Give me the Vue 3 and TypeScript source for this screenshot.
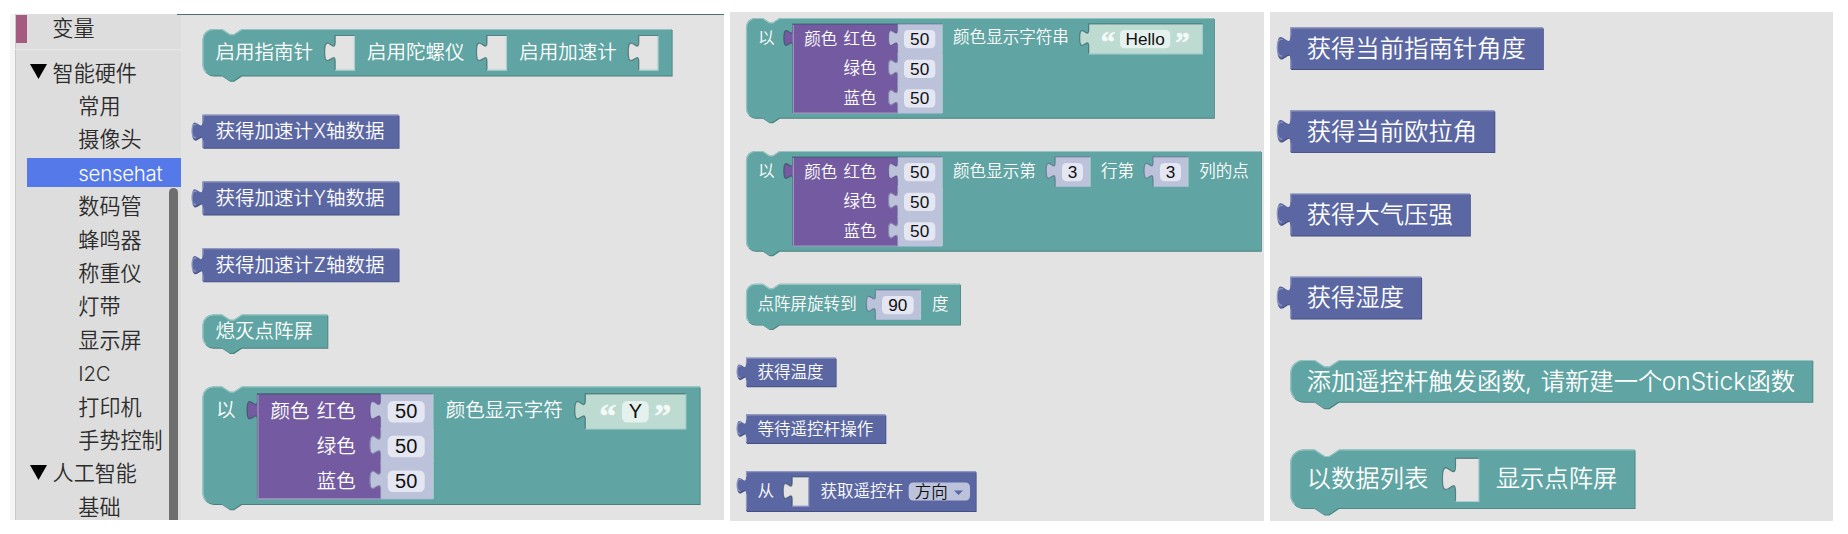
<script setup lang="ts">
type Kind = 'stack' | 'value'
type Tone = 'open' | 'math' | 'text' | 'colour' | 'mathRow'

interface Label { x: number; y: number; t: string; xs?: [number, string, number?][] }
interface Socket { x: number; y: number; r: number; b: number; tone: Tone }
interface Field { x: number; y: number; w: number; h: number; t: string; kind: 'math' | 'text' | 'menu' }
interface Block {
  kind: Kind
  x: number
  y: number
  r: number
  b: number
  labels: Label[]
  sockets?: Socket[]
  fields?: Field[]
}
interface Flyout {
  id: string
  box: string
  width: number
  height: number
  scale: number
  font: number
  digit: number
  blocks: Block[]
}

const categories = [
  { name: '智能硬件', open: true },
  { name: '常用' },
  { name: '摄像头' },
  { name: 'sensehat', active: true, latin: true },
  { name: '数码管' },
  { name: '蜂鸣器' },
  { name: '称重仪' },
  { name: '灯带' },
  { name: '显示屏' },
  { name: 'I2C', latin: true },
  { name: '打印机' },
  { name: '手势控制' },
  { name: '人工智能', open: true },
  { name: '基础' },
]

const value = (x: number, y: number, r: number, b: number, labels: Label[]): Block => ({
  kind: 'value', x, y, r, b, labels,
})

const first: Block[] = [
  {
    kind: 'stack', x: 203, y: 29.5, r: 672.3, b: 76,
    labels: [
      { x: 215.6, y: 52.3, t: '启用指南针' },
      { x: 367.2, y: 52.3, t: '启用陀螺仪' },
      { x: 519.4, y: 52.3, t: '启用加速计' },
    ],
    sockets: [
      { x: 335.7, y: 36, r: 355, b: 70.7, tone: 'open' },
      { x: 487.5, y: 36, r: 507, b: 70.7, tone: 'open' },
      { x: 639.3, y: 36, r: 658.5, b: 70.7, tone: 'open' },
    ],
  },
  ...['X', 'Y', 'Z'].map((axis, i) =>
    value(203, 115.3 + i * 66.8, 399.2, 148.3 + i * 66.8, [
      {
        x: 215.6, y: 131 + i * 66.8, t: '',
        xs: [[215.6, '获得加速计'], [313.5, axis, 12.4], [326, '轴数据']],
      },
    ]),
  ),
  {
    kind: 'stack', x: 203, y: 315, r: 328, b: 348.3,
    labels: [{ x: 215.6, y: 331.3, t: '熄灭点阵屏' }],
  },
  {
    kind: 'stack', x: 203, y: 387, r: 700.3, b: 504.5,
    labels: [
      { x: 216, y: 410, t: '以' },
      { x: 270.6, y: 411, t: '颜色' },
      { x: 316.8, y: 411, t: '红色' },
      { x: 316.8, y: 446, t: '绿色' },
      { x: 316.8, y: 480.6, t: '蓝色' },
      { x: 445.8, y: 409.8, t: '颜色显示字符' },
    ],
    sockets: [
      { x: 258, y: 394.3, r: 381, b: 499.3, tone: 'colour' },
      { x: 381, y: 394.3, r: 433.5, b: 429, tone: 'math' },
      { x: 381, y: 429, r: 433.5, b: 464, tone: 'mathRow' },
      { x: 381, y: 464, r: 433.5, b: 499.3, tone: 'mathRow' },
      { x: 585.8, y: 394.3, r: 686.3, b: 429.5, tone: 'text' },
    ],
    fields: [
      { x: 387.7, y: 401, w: 37, h: 21.5, t: '50', kind: 'math' },
      { x: 387.7, y: 435.8, w: 37, h: 21.5, t: '50', kind: 'math' },
      { x: 387.7, y: 470.5, w: 37, h: 21.5, t: '50', kind: 'math' },
      { x: 622, y: 401, w: 26.7, h: 21.5, t: 'Y', kind: 'text' },
    ],
  },
]

const colourBlock = (dy: number): Pick<Block, 'labels' | 'sockets' | 'fields'> => ({
  labels: [
    { x: 758, y: 37.5 + dy, t: '以' },
    { x: 804.4, y: 38.7 + dy, t: '颜色' },
    { x: 843.6, y: 38.7 + dy, t: '红色' },
    { x: 843.6, y: 68.3 + dy, t: '绿色' },
    { x: 843.6, y: 98 + dy, t: '蓝色' },
  ],
  sockets: [
    { x: 793.3, y: 24.5 + dy, r: 898, b: 113.5 + dy, tone: 'colour' },
    { x: 898, y: 24.5 + dy, r: 942.6, b: 54 + dy, tone: 'math' },
    { x: 898, y: 54 + dy, r: 942.6, b: 84 + dy, tone: 'mathRow' },
    { x: 898, y: 84 + dy, r: 942.6, b: 113.5 + dy, tone: 'mathRow' },
  ],
  fields: [
    { x: 904, y: 30 + dy, w: 31.3, h: 18.3, t: '50', kind: 'math' },
    { x: 904, y: 59.7 + dy, w: 31.3, h: 18.3, t: '50', kind: 'math' },
    { x: 904, y: 89.3 + dy, w: 31.3, h: 18.3, t: '50', kind: 'math' },
  ],
})

const showText = colourBlock(0)
const showDot = colourBlock(133)

const second: Block[] = [
  {
    kind: 'stack', x: 746.5, y: 18.5, r: 1214.5, b: 118.3,
    labels: [...showText.labels, { x: 953.2, y: 37.4, t: '颜色显示字符串' }],
    sockets: [...showText.sockets!, { x: 1089.2, y: 24.5, r: 1202.8, b: 54.3, tone: 'text' }],
    fields: [...showText.fields!, { x: 1120, y: 30, w: 50.3, h: 18.3, t: 'Hello', kind: 'text' }],
  },
  {
    kind: 'stack', x: 746.5, y: 151.5, r: 1261.5, b: 251.3,
    labels: [
      ...showDot.labels,
      { x: 953.2, y: 170.6, t: '颜色显示第' },
      { x: 1101.2, y: 170.6, t: '行第' },
      { x: 1199.4, y: 170.6, t: '列的点' },
    ],
    sockets: [
      ...showDot.sockets!,
      { x: 1055.7, y: 157.3, r: 1090.6, b: 187.3, tone: 'math' },
      { x: 1153.6, y: 157.3, r: 1188.5, b: 187.3, tone: 'math' },
    ],
    fields: [
      ...showDot.fields!,
      { x: 1062, y: 163, w: 21, h: 18.3, t: '3', kind: 'math' },
      { x: 1160, y: 163, w: 21, h: 18.3, t: '3', kind: 'math' },
    ],
  },
  {
    kind: 'stack', x: 746.5, y: 284.3, r: 960.6, b: 325.2,
    labels: [
      { x: 757.6, y: 303.7, t: '点阵屏旋转到' },
      { x: 932, y: 303.7, t: '度' },
    ],
    sockets: [{ x: 875.9, y: 290.3, r: 921, b: 320.3, tone: 'math' }],
    fields: [{ x: 882, y: 296, w: 31.7, h: 18.3, t: '90', kind: 'math' }],
  },
  value(746.5, 358.3, 836.3, 386.8, [{ x: 757.6, y: 371.8, t: '获得温度' }]),
  value(746.5, 415, 886, 443.5, [{ x: 757.6, y: 428.6, t: '等待遥控杆操作' }]),
  {
    kind: 'value', x: 746.5, y: 471.8, r: 976.3, b: 511.5,
    labels: [
      { x: 757.6, y: 491.2, t: '从' },
      { x: 820.5, y: 491.2, t: '获取遥控杆' },
    ],
    sockets: [{ x: 792.7, y: 477.5, r: 809.2, b: 506.6, tone: 'open' }],
    fields: [{ x: 908.7, y: 482.4, w: 61.3, h: 18.2, t: '方向', kind: 'menu' }],
  },
]

const third: Block[] = [
  value(1290.8, 28, 1543.5, 69.5, [{ x: 1306.8, y: 47.7, t: '获得当前指南针角度' }]),
  value(1290.8, 111, 1495, 152.7, [{ x: 1306.8, y: 131, t: '获得当前欧拉角' }]),
  value(1290.8, 194.2, 1470.5, 236, [{ x: 1306.8, y: 214.2, t: '获得大气压强' }]),
  value(1290.8, 277.3, 1421.8, 319, [{ x: 1306.8, y: 297.4, t: '获得湿度' }]),
  {
    kind: 'stack', x: 1290.8, y: 360.5, r: 1813, b: 402.3,
    labels: [
      {
        x: 1306.8, y: 380.6, t: '',
        xs: [
          [1306.8, '添加遥控杆触发函数'],
          [1525, ','],
          [1540.8, '请新建一个'],
          [1661.8, 'onStick', 84.5],
          [1746.6, '函数'],
        ],
      },
    ],
  },
  {
    kind: 'stack', x: 1290.8, y: 450, r: 1635.2, b: 508.7,
    labels: [
      { x: 1306.8, y: 478.4, t: '以数据列表' },
      { x: 1495.8, y: 478.4, t: '显示点阵屏' },
    ],
    sockets: [{ x: 1456, y: 458.8, r: 1479.3, b: 502, tone: 'open' }],
  },
]

const sensors: Flyout = {
  id: 'sensors', box: '181 16 543 504', width: 543, height: 504,
  scale: 1.31, font: 19.5, digit: 20, blocks: first,
}
const flyouts: Flyout[] = [
  { id: 'matrix', box: '730 12 534 509', width: 534, height: 509, scale: 1.12, font: 16.55, digit: 17.2, blocks: second },
  { id: 'stick', box: '1270 12 563 509', width: 563, height: 509, scale: 1.63, font: 24.35, digit: 25, blocks: third },
]

/** Puzzle tab running upwards along the left edge. */
const tab = (s: number) => `c 0,${-10 * s} ${-8 * s},${8 * s} ${-8 * s},${-7.5 * s} s ${8 * s},${2.5 * s} ${8 * s},${-7.5 * s}`

const plug = (o: { x: number; y: number; r: number; b: number }, s: number) =>
  `M ${o.x},${o.y} H ${o.r} V ${o.b} H ${o.x} V ${o.y + 20 * s} ${tab(s)} Z`

const stack = (o: Block, s: number) => {
  const c = 8 * s
  return `M ${o.x},${o.y + c} a ${c},${c} 0 0,1 ${c},${-c} H ${o.x + 15 * s} l ${6 * s},${4 * s} ${3 * s},0 ${6 * s},${-4 * s} ` +
    `H ${o.r} V ${o.b} H ${o.x + 29.5 * s} l ${-6 * s},${4 * s} ${-3 * s},0 ${-6 * s},${-4 * s} H ${o.x + c} a ${c},${c} 0 0,1 ${-c},${-c} Z`
}

const outline = (o: Block, s: number) => (o.kind === 'stack' ? stack(o, s) : plug(o, s))

const highlight = (o: Block, s: number) => {
  const c = 8 * s
  return o.kind === 'stack'
    ? `M ${o.x + 0.5 + c * 0.3},${o.b - c * 0.3} A ${c},${c} 0 0,1 ${o.x + 0.5},${o.b - c} V ${o.y + c} a ${c},${c} 0 0,1 ${c},${-c + 0.5} H ${o.x + 15 * s} l ${6 * s},${4 * s} ${3 * s},0 ${6 * s},${-4 * s} H ${o.r - 0.5}`
    : `M ${o.x + 0.5},${o.b - 1} V ${o.y + 20 * s} M ${o.x - 5 * s},${o.y + 17.6 * s} C ${o.x - 7 * s},${o.y + 17.4 * s} ${o.x - 8 * s},${o.y + 15.5 * s} ${o.x - 8 * s},${o.y + 12.5 * s} c 0,${-5 * s} ${1.6 * s},${-5.6 * s} ${3.4 * s},${-5.2 * s} M ${o.x + 0.5},${o.y + 5 * s} V ${o.y + 0.3} H ${o.r - 0.5}`
}

const socketShade = (o: Socket, s: number) => {
  const side = `M ${o.x},${o.b} V ${o.y + 20 * s} ${tab(s)} V ${o.y}`
  return o.tone === 'mathRow' ? side : `${side} H ${o.r}`
}
const socketLight = (o: Socket) =>
  o.tone === 'colour' ? `M ${o.x + 0.5},${o.y + 1} V ${o.b} H ${o.r}` : `M ${o.r},${o.y + 0.5} V ${o.b} ${o.tone === 'open' || o.tone === 'text' ? `H ${o.x}` : ''}`

const quoteSize = (f: Flyout) => f.font * 1.75
const allFlyouts = [sensors, ...flyouts]
</script>

<template>
  <main class="page">
    <section
      v-for="f in allFlyouts"
      :key="f.id"
      class="panel"
      :class="f.id"
    >
      <nav v-if="f.id === 'sensors'" class="toolbox">
        <div class="row variables"><span>变量</span></div>
        <div class="tree">
          <div
            v-for="c in categories"
            :key="c.name"
            class="row"
            :class="{ parent: c.open, active: c.active, latin: c.latin }"
          >
            <svg v-if="c.open" class="arrow" viewBox="0 0 17 15"><path d="M0 0H17L8.5 15Z" /></svg>
            <span>{{ c.name }}</span>
          </div>
        </div>
        <i class="thumb"></i>
      </nav>

      <svg class="canvas" :viewBox="f.box" :width="f.width" :height="f.height" :font-size="f.font">
        <g v-for="(b, i) in f.blocks" :key="i" :class="b.kind" transform="translate(-0.5 -0.5)">
          <path class="shadow" :d="outline(b, f.scale)" transform="translate(0.8 0.9)" />
          <path class="body" :d="outline(b, f.scale)" />
          <path class="light" :d="highlight(b, f.scale)" />

          <g v-for="(o, j) in b.sockets" :key="j" :class="o.tone">
            <path class="fill" :d="plug(o, f.scale)" />
            <path class="inner-dark" :d="socketShade(o, f.scale)" />
            <path class="inner-light" :d="socketLight(o)" />
          </g>

          <g v-for="(d, j) in b.fields" :key="j" transform="translate(0.5 0.5)">
            <rect :class="'field-' + d.kind" :x="d.x" :y="d.y" :width="d.w" :height="d.h" :rx="4 * f.scale" />
            <template v-if="d.kind === 'menu'">
              <text class="menu-text" :x="d.x + 6" :y="d.y + d.h / 2 + f.font * 0.37">{{ d.t }}</text>
              <path class="caret" :d="`M ${d.x + 45.3},${d.y + 8} h 9 l -4.5,4.6 z`" />
            </template>
            <text
              v-else
              class="entry"
              :font-size="f.digit"
              :x="d.x + d.w / 2"
              :y="d.y + d.h / 2 + f.digit * 0.33"
            >{{ d.t }}</text>
            <template v-if="d.kind === 'text'">
              <text class="quote" :font-size="quoteSize(f)" :x="d.x - 10.8 * f.scale" :y="d.y + quoteSize(f) * 0.75">“</text>
              <text class="quote" :font-size="quoteSize(f)" :x="d.x + d.w + 10.8 * f.scale" :y="d.y + quoteSize(f) * 0.75">”</text>
            </template>
          </g>

          <text v-for="(l, j) in b.labels" :key="j" class="label" :x="l.x + 0.4" :y="l.y + 0.4 + f.font * 0.37">
            <template v-if="l.xs"><tspan
              v-for="(p, k) in l.xs"
              :key="k"
              :x="p[0] + 0.4"
              :textLength="p[2]"
              :lengthAdjust="p[2] ? 'spacingAndGlyphs' : undefined"
            >{{ p[1] }}</tspan></template>
            <template v-else>{{ l.t }}</template>
          </text>
        </g>
      </svg>
    </section>
  </main>
</template>

<style>
body {
  background: #fff;
}
</style>

<style scoped>
.page {
  box-sizing: border-box;
  display: flex;
  align-items: flex-start;
  gap: 6px;
  width: 1848px;
  height: 534px;
  padding: 12px 15px 0 10px;
  overflow: hidden;
  background: #fff;
  font-family: Inter, "Noto Sans CJK SC", sans-serif;
  font-weight: 350;
}

.panel {
  display: flex;
  flex: none;
  background: #e3e3e3;
}

.sensors {
  box-sizing: border-box;
  width: 714px;
  height: 506px;
  margin-top: 2px;
}

.sensors .canvas {
  box-sizing: content-box;
  border-top: 1px solid #4b726e;
  padding-top: 1px;
}

.canvas {
  display: block;
  flex: none;
}

.toolbox {
  position: relative;
  box-sizing: border-box;
  flex: none;
  width: 171px;
  height: 506px;
  border-left: 5px solid #f5f5f5;
  background: #ddd;
  box-shadow: inset 1px 0 0 #c9c9c9;
  overflow: hidden;
  color: #2c2c2c;
  font-size: 21.1px;
}

.toolbox::after {
  content: "";
  position: absolute;
  top: 0;
  right: 0;
  width: 4px;
  height: 1px;
  background: #4b726e;
}

.row {
  display: flex;
  box-sizing: border-box;
  align-items: center;
  height: 29px;
  margin: 0 0 4.42px 12px;
  padding: 2.2px 0 0 51.3px;
  line-height: 29px;
  white-space: nowrap;
}

.variables {
  height: 28px;
  margin: 1px 0 0 1px;
  padding: 0 0 0.6px 25.3px;
  border-left: 11px solid #a55b80;
}

.tree {
  margin-top: 5.5px;
  padding-top: 8px;
  border-top: 1px solid #e9e9e9;
}

.parent {
  padding-left: 2.7px;
}

.parent span {
  margin-left: 5.9px;
}

.arrow {
  width: 17px;
  height: 15px;
  margin-top: -3px;
}

.latin {
  font-size: 20.4px;
  letter-spacing: -0.25px;
}

.active {
  background: #5579e9;
  color: #fff;
}

.thumb {
  position: absolute;
  top: 174px;
  right: 3px;
  bottom: 0;
  width: 9px;
  border-radius: 5px 5px 0 0;
  background: #6e6e6e;
}

text {
  white-space: pre;
}

.label {
  fill: #fff;
}

.entry {
  fill: #111;
  font-family: "Liberation Sans", Arial, sans-serif;
  font-weight: 400;
  text-anchor: middle;
}

.menu-text {
  fill: #111;
}

.quote {
  fill: #fff;
  fill-opacity: 0.85;
  stroke: #fff;
  stroke-width: 0.7;
  stroke-opacity: 0.6;
  font-family: "Liberation Serif", serif;
  font-weight: 700;
  text-anchor: middle;
}

.stack .body {
  fill: #60a5a3;
}

.stack .shadow {
  fill: #487f7d;
}

.value .body {
  fill: #5b67a3;
}

.value .shadow {
  fill: #454f82;
}

.light,
.inner-dark,
.inner-light {
  fill: none;
  stroke-width: 1.2;
}

.stack .light {
  stroke: #94c5c3;
}

.value .light {
  stroke: #8f97c2;
}

.inner-dark {
  stroke: rgba(35, 70, 75, 0.55);
}

.inner-light {
  stroke: #a9cfce;
}

.value .inner-light {
  stroke: #9aa2c9;
}

.open .fill {
  fill: #e3e3e3;
}

.math .fill,
.mathRow .fill {
  fill: #bdc2db;
}

.mathRow .fill {
  stroke: #bdc2db;
  stroke-width: 1;
}

.mathRow .inner-dark,
.math .inner-dark {
  stroke: rgba(60, 60, 110, 0.4);
}

.text .fill {
  fill: #bddbd1;
}

.colour .fill {
  fill: #745ba1;
}

.colour .inner-light {
  stroke: #a995c4;
}

.field-math {
  fill: #e4e6f1;
}

.field-text {
  fill: #e4f1ec;
}

.field-menu {
  fill: #bdc2db;
}

.caret {
  fill: #5b67a3;
}

.arrow path {
  fill: #000;
}
</style>
